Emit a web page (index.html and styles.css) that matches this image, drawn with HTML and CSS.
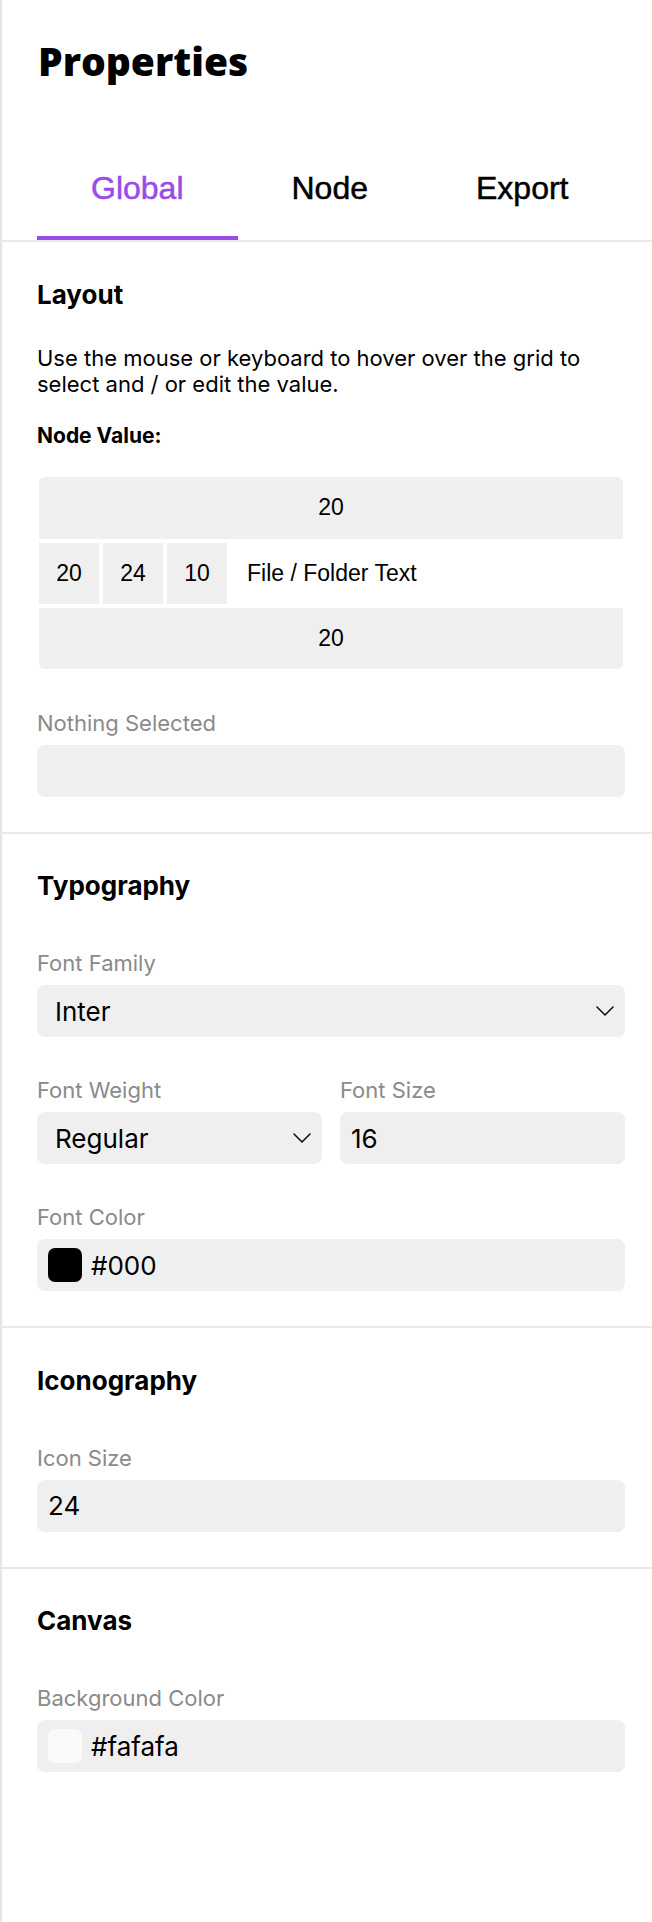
FILE: index.html
```html
<!DOCTYPE html>
<html lang="en">
<head>
<meta charset="utf-8">
<title>Properties</title>
<link rel="stylesheet" href="styles.css">
</head>
<body>
<aside class="panel">
  <header class="panel-header">
    <h1 class="panel-title">Properties</h1>
  </header>
  <nav class="tabs">
    <button class="tab tab-active">Global</button>
    <button class="tab">Node</button>
    <button class="tab">Export</button>
  </nav>

  <section class="section">
    <h2 class="section-title section-title-tight">Layout</h2>
    <p class="section-desc">Use the mouse or keyboard to hover over the grid to select and / or edit the value.</p>
    <p class="node-value">Node Value:</p>
    <div class="node-grid">
      <button class="cell cell-top">20</button>
      <button class="cell">20</button>
      <button class="cell">24</button>
      <button class="cell">10</button>
      <div class="cell-text">File / Folder Text</div>
      <button class="cell cell-bottom">20</button>
    </div>
    <div class="field">
      <span class="field-label">Nothing Selected</span>
      <div class="input"></div>
    </div>
  </section>

  <section class="section">
    <h2 class="section-title">Typography</h2>
    <div class="fields">
      <div class="field">
        <span class="field-label">Font Family</span>
        <div class="input select">
          <span class="value">Inter</span>
          <svg class="chevron" width="18" height="10" viewBox="0 0 18 10"><polyline points="1,1 9,9 17,1" fill="none" stroke="#111" stroke-width="1.6" stroke-linecap="round" stroke-linejoin="round"/></svg>
        </div>
      </div>
      <div class="field-row">
        <div class="field">
          <span class="field-label">Font Weight</span>
          <div class="input select">
            <span class="value">Regular</span>
            <svg class="chevron" width="18" height="10" viewBox="0 0 18 10"><polyline points="1,1 9,9 17,1" fill="none" stroke="#111" stroke-width="1.6" stroke-linecap="round" stroke-linejoin="round"/></svg>
          </div>
        </div>
        <div class="field">
          <span class="field-label">Font Size</span>
          <div class="input"><span class="value">16</span></div>
        </div>
      </div>
      <div class="field">
        <span class="field-label">Font Color</span>
        <div class="input">
          <span class="swatch swatch-black"></span>
          <span class="value">#000</span>
        </div>
      </div>
    </div>
  </section>

  <section class="section">
    <h2 class="section-title">Iconography</h2>
    <div class="field">
      <span class="field-label">Icon Size</span>
      <div class="input"><span class="value">24</span></div>
    </div>
  </section>

  <section class="section section-last">
    <h2 class="section-title">Canvas</h2>
    <div class="field">
      <span class="field-label">Background Color</span>
      <div class="input">
        <span class="swatch swatch-light"></span>
        <span class="value">#fafafa</span>
      </div>
    </div>
  </section>
</aside>
</body>
</html>
```

FILE: styles.css
```css
* { box-sizing: border-box; }

html, body {
  margin: 0;
  padding: 0;
  background: #ffffff;
}

body {
  font-family: Inter, "Noto Sans", sans-serif;
  color: #000;
}

.panel {
  min-height: 1922px;
  border-left: 2px solid #e6e6e6;
  background: #ffffff;
}

.panel-header {
  padding: 41px 27px 0 36px;
}

.panel-title {
  margin: 0;
  font-family: "Open Sans", sans-serif;
  font-weight: 800;
  font-size: 39px;
  line-height: 39px;
}

.tabs {
  display: flex;
  margin-top: 90px;
  padding-left: 35px;
  border-bottom: 2px solid #e9e9e9;
}

.tab {
  font-family: "Liberation Sans", Arial, sans-serif;
  font-size: 32px;
  line-height: 37px;
  padding: 0 54px 29px;
  margin: 0;
  border: 0;
  border-bottom: 4px solid transparent;
  background: none;
  color: #000;
  -webkit-text-stroke: 0.5px currentColor;
}

.tab-active {
  color: #994bea;
  border-bottom-color: #994bea;
}

.section {
  padding: 34px 27px 35px 35px;
  border-bottom: 2px solid #e9e9e9;
}

.section-last {
  border-bottom: 0;
}

.section-title {
  margin: 0 0 48.5px;
  padding-top: 2.5px;
  font-size: 26px;
  font-weight: 700;
  line-height: 31.5px;
}

.section-title-tight {
  margin-bottom: 36px;
}

.section-desc {
  margin: 0 0 26px;
  font-size: 22px;
  line-height: 25.5px;
}

.node-value {
  margin: 0 0 28px;
  font-size: 21px;
  font-weight: 700;
  line-height: 25.5px;
}

.node-grid {
  display: grid;
  grid-template-columns: 60px 60px 60px 1fr;
  grid-template-rows: 62px 61px 61px;
  gap: 4px;
  margin: 0 2px 41px;
}

.cell {
  display: flex;
  align-items: center;
  justify-content: center;
  margin: 0;
  padding: 0;
  border: 0;
  background: #efefef;
  font-family: "Liberation Sans", Arial, sans-serif;
  font-size: 23px;
  color: #000;
}

.cell-top {
  grid-column: 1 / -1;
  border-radius: 6px 6px 0 0;
}

.cell-bottom {
  grid-column: 1 / -1;
  border-radius: 0 0 6px 6px;
}

.cell-text {
  display: flex;
  align-items: center;
  padding-left: 16px;
  font-family: "Liberation Sans", Arial, sans-serif;
  font-size: 23px;
}

.fields {
  display: flex;
  flex-direction: column;
  gap: 40px;
}

.field-row {
  display: grid;
  grid-template-columns: 1fr 1fr;
  gap: 18px;
}

.field {
  display: flex;
  flex-direction: column;
}

.field-label {
  display: block;
  margin-bottom: 8px;
  font-size: 22px;
  line-height: 27px;
  color: #8a8a8a;
}

.input {
  display: flex;
  align-items: center;
  height: 52px;
  padding: 0 11px;
  background: #efefef;
  border-radius: 8px;
  font-size: 26px;
  color: #000;
}

.select {
  justify-content: space-between;
  padding: 0 11px 0 18px;
}

.chevron {
  flex: none;
}

.swatch {
  flex: none;
  width: 34px;
  height: 34px;
  margin-right: 9px;
  border-radius: 7px;
}

.swatch-black {
  background: #000;
}

.swatch-light {
  background: #fafafa;
}
```
